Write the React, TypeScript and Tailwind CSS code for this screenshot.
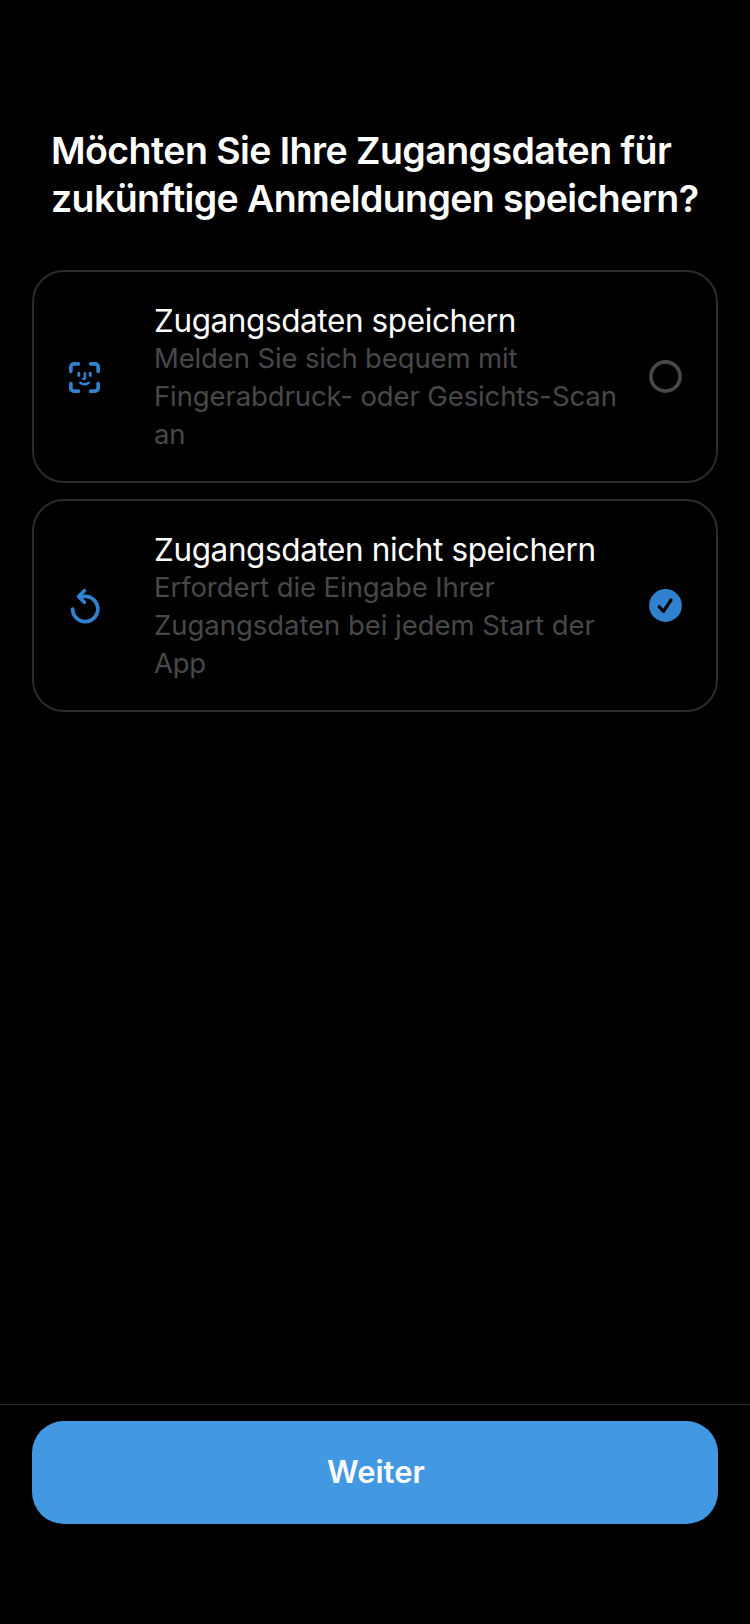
import React from "react";

function FaceIcon() {
  return (
    <svg className="mt-[3px]" width="32" height="32" viewBox="0 0 32 32" fill="none" stroke="#3182ce" strokeWidth="3.7" strokeLinecap="round">
      <path d="M1.850 9.300V4.850a3 3 0 0 1 3-3H9.300M21.700 1.850h4.450a3 3 0 0 1 3 3V9.300M29.150 21.700v4.450a3 3 0 0 1-3 3H21.700M9.300 29.150H4.850a3 3 0 0 1-3-3V21.700" />
      <path strokeWidth="2.9" d="M9.800 11.300v2.200M21.200 11.300v2.200" />
      <path strokeWidth="2.5" d="M15.900 11.200v4.400q0 1.500-1.500 1.500M11.300 20.700Q15.500 23.900 19.700 20.700" />
    </svg>
  );
}

function ResetIcon() {
  return (
    <svg className="mt-[1px]" width="36" height="38" viewBox="0 0 36 38" fill="none" stroke="#3182ce" strokeWidth="3.7" strokeLinecap="round" strokeLinejoin="round">
      <path d="M5.600 22a12.600 12.600 0 1 0 12.600-12.600H12" />
      <path d="M17.300 3.700L11.700 9.500l5.600 5.800" />
    </svg>
  );
}

function Radio({ checked }: { checked: boolean }) {
  return (
    <svg className="shrink-0" width="33" height="33" viewBox="0 0 33 33" fill="none">
      {checked ? (
        <>
          <circle cx="16.5" cy="16.5" r="16.4" fill="#3182ce" />
          <path d="M10.300 17.800l4.200 4.500L22 11" stroke="#000" strokeWidth="3.2" strokeLinecap="round" strokeLinejoin="round" />
        </>
      ) : (
        <circle cx="16.5" cy="16.5" r="14.6" stroke="#48484a" strokeWidth="3.6" />
      )}
    </svg>
  );
}

type OptionProps = {
  icon: React.ReactNode;
  title: string;
  titleClass: string;
  lines: { text: string; spacing: string }[];
  checked: boolean;
};

function Option({ icon, title, titleClass, lines, checked }: OptionProps) {
  return (
    <div className="flex h-[213px] items-center rounded-[32px] border-2 border-[#2c2c2c] pr-[34px] pl-[33px]">
      <div className="flex w-[36px] shrink-0 justify-center">{icon}</div>
      <div className="ml-[51px] flex-1 pt-[1px] whitespace-nowrap">
        <div className={`text-[31.5px] leading-[37px] text-white ${titleClass}`}>{title}</div>
        {lines.map((line) => (
          <div key={line.text} className={`text-[27.5px] leading-[38px] text-[#48484a] ${line.spacing}`}>
            {line.text}
          </div>
        ))}
      </div>
      <Radio checked={checked} />
    </div>
  );
}

export default function App() {
  return (
    <div className="flex h-[1624px] w-[750px] flex-col bg-black font-['Inter',sans-serif]">
      <h1 className="mt-[127px] ml-[51px] text-[37.5px] leading-[48px] font-semibold whitespace-nowrap text-white">
        <div className="tracking-[-0.56px]">Möchten Sie Ihre Zugangsdaten für</div>
        <div className="tracking-[-0.61px]">zukünftige Anmeldungen speichern?</div>
      </h1>
      <div className="mx-8 mt-[47px] flex flex-col gap-4">
        <Option
          icon={<FaceIcon />}
          title="Zugangsdaten speichern"
          titleClass="tracking-[-0.4px]"
          checked={false}
          lines={[
            { text: "Melden Sie sich bequem mit", spacing: "tracking-[-0.14px]" },
            { text: "Fingerabdruck- oder Gesichts-Scan", spacing: "tracking-[-0.11px]" },
            { text: "an", spacing: "tracking-[-0.1px]" },
          ]}
        />
        <Option
          icon={<ResetIcon />}
          title="Zugangsdaten nicht speichern"
          titleClass="tracking-[-0.39px]"
          checked
          lines={[
            { text: "Erfordert die Eingabe Ihrer", spacing: "tracking-[-0.08px]" },
            { text: "Zugangsdaten bei jedem Start der", spacing: "tracking-[-0.04px]" },
            { text: "App", spacing: "tracking-[-0.3px]" },
          ]}
        />
      </div>
      <div className="mt-auto h-[220px] border-t border-[#303030] px-8 pt-[16px]">
        <button className="h-[103px] w-full rounded-[32px] bg-[#4299e1] pl-[2px] text-[31px] font-semibold text-white">Weiter</button>
      </div>
    </div>
  );
}
